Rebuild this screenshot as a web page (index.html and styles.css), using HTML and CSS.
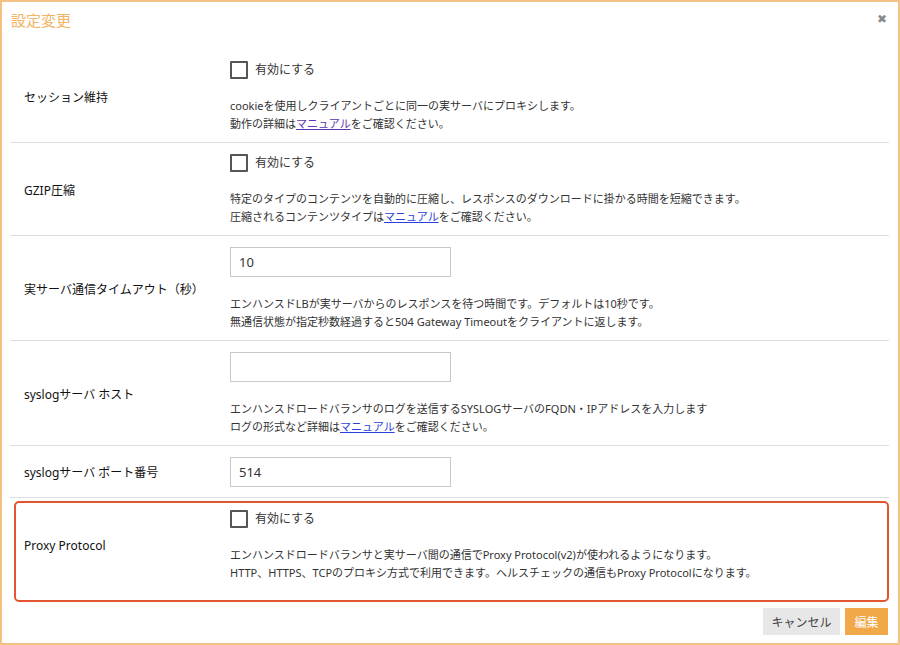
FILE: index.html
```html
<!DOCTYPE html>
<html lang="ja">
<head>
<meta charset="utf-8">
<title>設定変更</title>
<link rel="stylesheet" href="styles.css">
</head>
<body>
<div class="dialog">
  <div class="header">
    <span class="title">設定変更</span>
    <span class="close">✖</span>
  </div>
  <div class="form">
    <div class="row">
      <div class="label">セッション維持</div>
      <div class="value">
        <div class="check"><span class="box"></span>有効にする</div>
        <p class="desc">cookieを使用しクライアントごとに同一の実サーバにプロキシします。<br>動作の詳細は<a class="link visited" href="#">マニュアル</a>をご確認ください。</p>
      </div>
    </div>
    <div class="row">
      <div class="label">GZIP圧縮</div>
      <div class="value">
        <div class="check"><span class="box"></span>有効にする</div>
        <p class="desc">特定のタイプのコンテンツを自動的に圧縮し、レスポンスのダウンロードに掛かる時間を短縮できます。<br>圧縮されるコンテンツタイプは<a class="link" href="#">マニュアル</a>をご確認ください。</p>
      </div>
    </div>
    <div class="row">
      <div class="label">実サーバ通信タイムアウト（秒）</div>
      <div class="value">
        <div class="input">10</div>
        <p class="desc">エンハンスドLBが実サーバからのレスポンスを待つ時間です。デフォルトは10秒です。<br>無通信状態が指定秒数経過すると504 Gateway Timeoutをクライアントに返します。</p>
      </div>
    </div>
    <div class="row">
      <div class="label">syslogサーバ ホスト</div>
      <div class="value">
        <div class="input"></div>
        <p class="desc">エンハンスドロードバランサのログを送信するSYSLOGサーバのFQDN・IPアドレスを入力します<br>ログの形式など詳細は<a class="link" href="#">マニュアル</a>をご確認ください。</p>
      </div>
    </div>
    <div class="row">
      <div class="label">syslogサーバ ポート番号</div>
      <div class="value">
        <div class="input">514</div>
      </div>
    </div>
    <div class="row highlight">
      <div class="label">Proxy Protocol</div>
      <div class="value">
        <div class="check"><span class="box"></span>有効にする</div>
        <p class="desc">エンハンスドロードバランサと実サーバ間の通信でProxy Protocol(v2)が使われるようになります。<br>HTTP、HTTPS、TCPのプロキシ方式で利用できます。ヘルスチェックの通信もProxy Protocolになります。</p>
      </div>
    </div>
  </div>
  <div class="footer">
    <button class="btn cancel">キャンセル</button>
    <button class="btn primary">編集</button>
  </div>
</div>
</body>
</html>
```

FILE: styles.css
```css
html, body {
  margin: 0;
  padding: 0;
  background: #fff;
}
body {
  font-family: "Noto Sans", "Noto Sans CJK JP", sans-serif;
  color: #333;
}
.dialog {
  width: 900px;
  height: 645px;
  box-sizing: border-box;
  border: 2px solid #f3c283;
  display: flex;
  flex-direction: column;
}
.header {
  height: 36px;
  display: flex;
  align-items: center;
  justify-content: space-between;
  padding: 0 11px 0 9px;
}
.title {
  font-size: 15px;
  color: #f2b465;
  line-height: 1;
}
.close {
  font-size: 12px;
  color: #8a8a8a;
  line-height: 1;
  margin-top: -2px;
}
.form {
  margin: 12px 9px 0 8px;
}
.row {
  display: grid;
  grid-template-columns: 206px 1fr;
  align-items: center;
  padding: 11px 0 10px 14px;
  border-bottom: 1px solid #dedede;
}
.label {
  font-size: 12px;
  font-weight: 400;
  color: #111;
}
.value {
  display: flex;
  flex-direction: column;
  align-items: flex-start;
}
.check {
  display: flex;
  align-items: center;
  gap: 7px;
  font-size: 12px;
  line-height: 18px;
  height: 18px;
  color: #333;
}
.box {
  width: 18px;
  height: 18px;
  box-sizing: border-box;
  border: 2px solid #555;
  border-radius: 1px;
  background: #fff;
}
.input {
  width: 221px;
  height: 30px;
  box-sizing: border-box;
  border: 1px solid #c8c8c8;
  padding: 0 8px;
  font-size: 13px;
  line-height: 28px;
  color: #333;
}
.desc {
  margin: 18px 0 -1px;
  font-size: 11px;
  line-height: 18px;
  color: #333;
}
.link {
  color: #2b3fdf;
  text-decoration: underline;
}
.link.visited {
  color: #5b36b3;
}
.row.highlight {
  border: 2px solid #e2552f;
  border-radius: 5px;
  margin-top: 3px;
  margin-left: 4px;
  padding: 7px 0 19px 8px;
}
.footer {
  display: flex;
  justify-content: flex-end;
  gap: 5px;
  padding: 6px 10px 0 0;
}
.btn {
  border: none;
  height: 27px;
  font-family: inherit;
  font-size: 12px;
  padding: 0;
  cursor: pointer;
}
.cancel {
  width: 77px;
  background: #e7e7e7;
  color: #444;
}
.primary {
  width: 43px;
  background: #f0a849;
  color: #fff;
}
```
